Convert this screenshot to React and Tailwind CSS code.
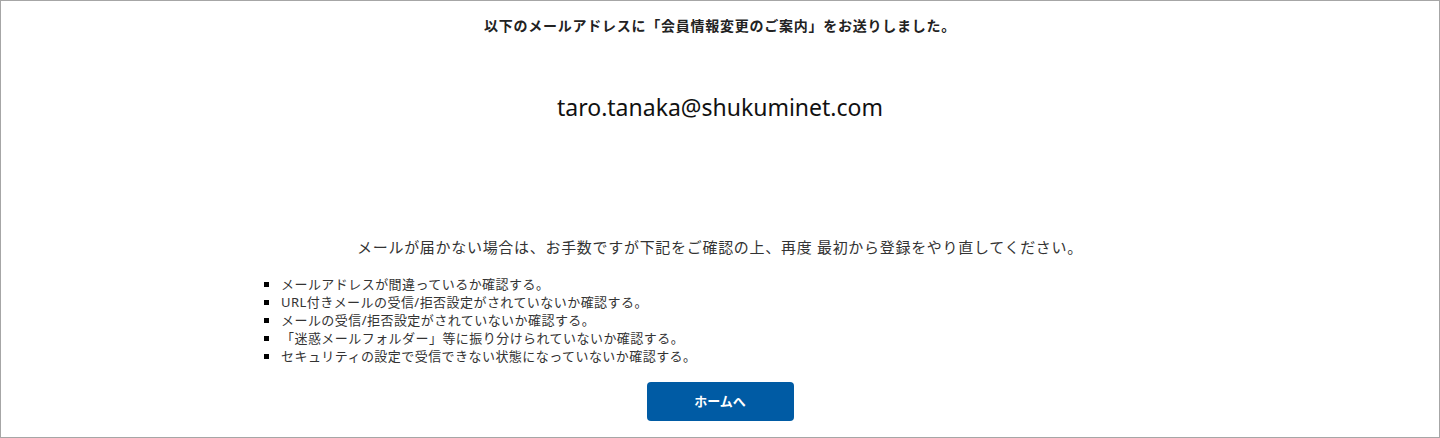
export default function App() {
  const items = [
    "メールアドレスが間違っているか確認する。",
    "URL付きメールの受信/拒否設定がされていないか確認する。",
    "メールの受信/拒否設定がされていないか確認する。",
    "「迷惑メールフォルダー」等に振り分けられていないか確認する。",
    "セキュリティの設定で受信できない状態になっていないか確認する。",
  ];
  return (
    <div
      className="w-[1440px] h-[438px] bg-white border border-[#a6a6a6] flex flex-col items-center text-[#222]"
      style={{ fontFamily: '"Noto Sans", "Noto Sans CJK JP", sans-serif' }}
    >
      <p className="mt-[15px] text-[14px] leading-[20px] font-bold tracking-[0.75px] text-[#222]">
        以下のメールアドレスに「会員情報変更のご案内」をお送りしました。
      </p>
      <p className="mt-[55px] text-[23px] leading-[32px] text-[#111]">
        taro.tanaka@shukuminet.com
      </p>
      <p className="mt-[113px] text-[15px] leading-[22px] tracking-[0.7px] text-[#333]">
        メールが届かない場合は、お手数ですが下記をご確認の上、再度 最初から登録をやり直してください。
      </p>
      <ul className="mt-[17px] w-[912px] text-[13px] leading-[18px] tracking-[0.45px] text-[#333]">
        {items.map((t) => (
          <li key={t} className="flex items-center">
            <span className="w-[5px] h-[5px] bg-black shrink-0" />
            <span className="ml-[12px]">{t}</span>
          </li>
        ))}
      </ul>
      <button className="mt-[17px] w-[147px] h-[39px] rounded-[4px] bg-[#005ba4] text-white text-[13px] font-bold">
        ホームへ
      </button>
    </div>
  );
}
